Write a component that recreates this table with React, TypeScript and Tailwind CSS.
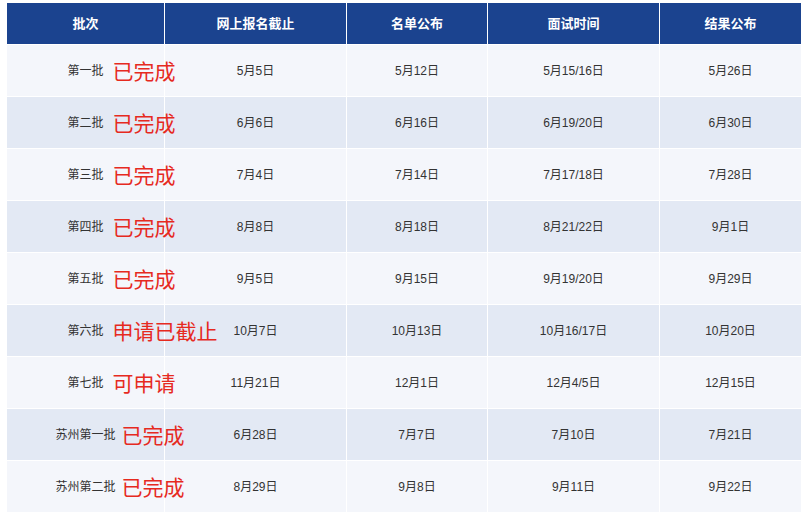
const headers = ['批次', '网上报名截止', '名单公布', '面试时间', '结果公布'];

const rows: Array<{ batch: string; status: string; cells: string[] }> = [
  { batch: '第一批', status: '已完成', cells: ['5月5日', '5月12日', '5月15/16日', '5月26日'] },
  { batch: '第二批', status: '已完成', cells: ['6月6日', '6月16日', '6月19/20日', '6月30日'] },
  { batch: '第三批', status: '已完成', cells: ['7月4日', '7月14日', '7月17/18日', '7月28日'] },
  { batch: '第四批', status: '已完成', cells: ['8月8日', '8月18日', '8月21/22日', '9月1日'] },
  { batch: '第五批', status: '已完成', cells: ['9月5日', '9月15日', '9月19/20日', '9月29日'] },
  { batch: '第六批', status: '申请已截止', cells: ['10月7日', '10月13日', '10月16/17日', '10月20日'] },
  { batch: '第七批', status: '可申请', cells: ['11月21日', '12月1日', '12月4/5日', '12月15日'] },
  { batch: '苏州第一批', status: '已完成', cells: ['6月28日', '7月7日', '7月10日', '7月21日'] },
  { batch: '苏州第二批', status: '已完成', cells: ['8月29日', '9月8日', '9月11日', '9月22日'] },
];

export default function App() {
  return (
    <div
      className="w-[808px] h-[519px] bg-white pl-[7px] pt-[3px]"
      style={{ fontFamily: '"Liberation Sans", "Noto Sans CJK SC", sans-serif' }}
    >
      <div className="grid w-[794px] grid-cols-[157px_181px_140px_171px_141px] gap-px bg-white">
        {/* Header */}
        {headers.map((h) => (
          <div
            key={h}
            className="flex h-[41px] items-center justify-center bg-[#1b438f] text-[13px] font-bold text-white"
          >
            {h}
          </div>
        ))}

        {/* Body */}
        {rows.map((row, i) => {
          const bg = i % 2 === 0 ? 'bg-[#f4f6fb]' : 'bg-[#e3e9f4]';
          const gap = row.batch.length > 3 ? 'ml-[6px]' : 'ml-[9px]';
          return (
            <div key={row.batch} className="contents">
              <div className={`flex h-[51px] items-center justify-center ${bg} pt-px text-[12px] text-[#333]`}>
                <span className="relative">
                  {row.batch}
                  <span
                    className={`absolute left-full top-1/2 z-10 ${gap} -translate-y-1/2 whitespace-nowrap text-[21px] leading-none text-[#e62a1f]`}
                  >
                    {row.status}
                  </span>
                </span>
              </div>
              {row.cells.map((c, j) => (
                <div
                  key={j}
                  className={`flex h-[51px] items-center justify-center ${bg} pt-px text-[12px] text-[#333]`}
                >
                  {c}
                </div>
              ))}
            </div>
          );
        })}
      </div>
    </div>
  );
}
